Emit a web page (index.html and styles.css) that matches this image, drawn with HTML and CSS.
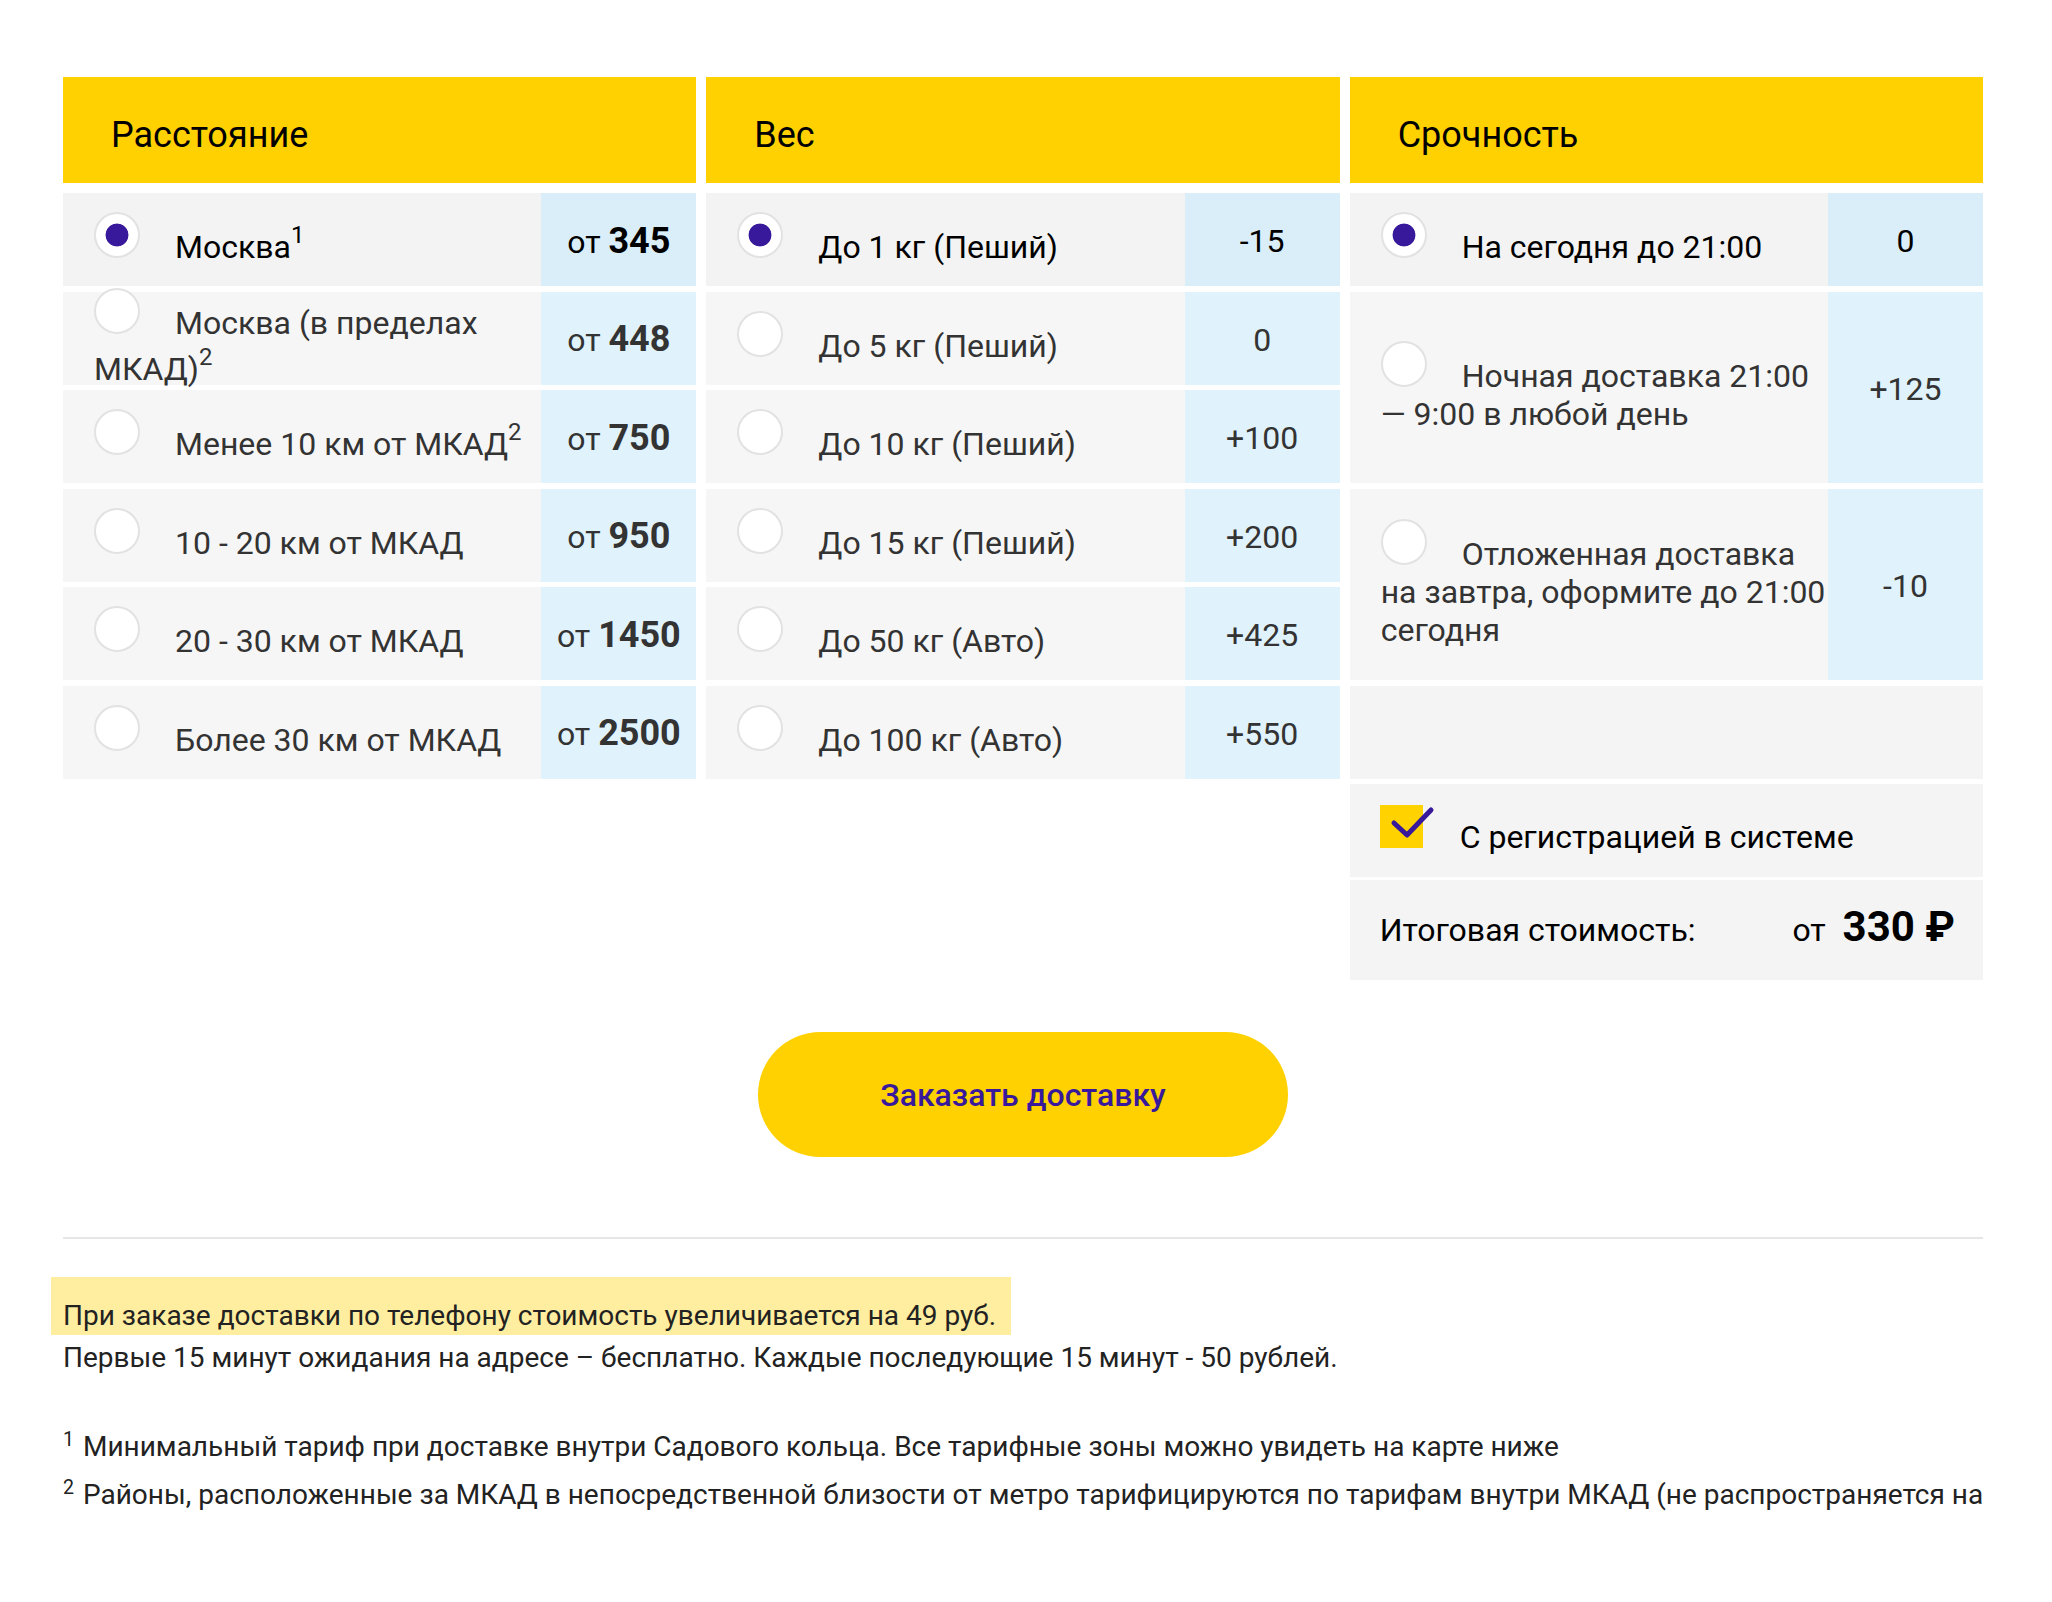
FILE: index.html
```html
<!DOCTYPE html>
<html lang="ru">
<head>
<meta charset="utf-8">
<title>Калькулятор доставки</title>
<link rel="stylesheet" href="styles.css">
</head>
<body>
<main class="page">
  <section class="calc">
    <div class="col">
      <div class="head">Расстояние</div>
      <div class="row sel">
        <div class="lbl"><div class="txt"><span class="radio on"></span>Москва<sup>1</sup></div></div>
        <div class="val"><span>от <b>345</b></span></div>
      </div>
      <div class="row">
        <div class="lbl"><div class="txt"><span class="radio"></span>Москва (в пределах МКАД)<sup>2</sup></div></div>
        <div class="val"><span>от <b>448</b></span></div>
      </div>
      <div class="row">
        <div class="lbl"><div class="txt"><span class="radio"></span>Менее 10 км от МКАД<sup>2</sup></div></div>
        <div class="val"><span>от <b>750</b></span></div>
      </div>
      <div class="row">
        <div class="lbl"><div class="txt"><span class="radio"></span>10 - 20 км от МКАД</div></div>
        <div class="val"><span>от <b>950</b></span></div>
      </div>
      <div class="row">
        <div class="lbl"><div class="txt"><span class="radio"></span>20 - 30 км от МКАД</div></div>
        <div class="val"><span>от <b>1450</b></span></div>
      </div>
      <div class="row">
        <div class="lbl"><div class="txt"><span class="radio"></span>Более 30 км от МКАД</div></div>
        <div class="val"><span>от <b>2500</b></span></div>
      </div>
    </div>

    <div class="col">
      <div class="head">Вес</div>
      <div class="row sel">
        <div class="lbl"><div class="txt"><span class="radio on"></span>До 1 кг (Пеший)</div></div>
        <div class="val"><span>-15</span></div>
      </div>
      <div class="row">
        <div class="lbl"><div class="txt"><span class="radio"></span>До 5 кг (Пеший)</div></div>
        <div class="val"><span>0</span></div>
      </div>
      <div class="row">
        <div class="lbl"><div class="txt"><span class="radio"></span>До 10 кг (Пеший)</div></div>
        <div class="val"><span>+100</span></div>
      </div>
      <div class="row">
        <div class="lbl"><div class="txt"><span class="radio"></span>До 15 кг (Пеший)</div></div>
        <div class="val"><span>+200</span></div>
      </div>
      <div class="row">
        <div class="lbl"><div class="txt"><span class="radio"></span>До 50 кг (Авто)</div></div>
        <div class="val"><span>+425</span></div>
      </div>
      <div class="row">
        <div class="lbl"><div class="txt"><span class="radio"></span>До 100 кг (Авто)</div></div>
        <div class="val"><span>+550</span></div>
      </div>
    </div>

    <div class="col">
      <div class="head">Срочность</div>
      <div class="row sel">
        <div class="lbl"><div class="txt"><span class="radio on"></span>На сегодня до 21:00</div></div>
        <div class="val"><span>0</span></div>
      </div>
      <div class="row tall">
        <div class="lbl"><div class="txt"><span class="radio"></span>Ночная доставка 21:00 — 9:00 в любой день</div></div>
        <div class="val"><span>+125</span></div>
      </div>
      <div class="row tall">
        <div class="lbl"><div class="txt"><span class="radio"></span>Отложенная доставка на завтра, оформите до 21:00 сегодня</div></div>
        <div class="val"><span>-10</span></div>
      </div>
      <div class="row empty"></div>
      <div class="row reg">
        <div class="txt dark"><span class="check"><svg width="43" height="43" viewBox="0 0 43 43"><polyline points="14,18 27,30 51,5" fill="none" stroke="#38199b" stroke-width="5" stroke-linecap="round" stroke-linejoin="round"/></svg></span>С регистрацией в системе</div>
      </div>
      <div class="row total">
        <span class="total-lbl">Итоговая стоимость:</span>
        <span class="total-sum">от <b>330 ₽</b></span>
      </div>
    </div>
  </section>

  <div class="order"><button class="btn" type="button">Заказать доставку</button></div>

  <hr class="rule">

  <div class="notes">
    <p class="hl">При заказе доставки по телефону стоимость увеличивается на 49 руб.</p>
    <p class="wait">Первые 15 минут ожидания на адресе – бесплатно. Каждые последующие 15 минут - 50 рублей.</p>
    <p class="fn first"><sup>1</sup> Минимальный тариф при доставке внутри Садового кольца. Все тарифные зоны можно увидеть на карте ниже</p>
    <p class="fn"><sup>2</sup> Районы, расположенные за МКАД в непосредственной близости от метро тарифицируются по тарифам внутри МКАД (не распространяется на</p>
  </div>
</main>
</body>
</html>
```

FILE: styles.css
```css
* { box-sizing: border-box; }

body {
  margin: 0;
  background: #ffffff;
  font-family: Roboto, "Liberation Sans", Arial, sans-serif;
  color: #333333;
}

.page {
  width: 1920px;
  margin-left: 63px;
  padding-top: 77px;
}

.calc {
  display: grid;
  grid-template-columns: repeat(3, 1fr);
  column-gap: 10px;
  align-items: start;
}

.col {
  display: flex;
  flex-direction: column;
  gap: 5.5px;
}

.head {
  height: 106px;
  margin-bottom: 4.5px;
  padding: 10px 0 0 48px;
  background: #ffd100;
  color: #000;
  font-size: 36px;
  display: flex;
  align-items: center;
}

.row {
  display: flex;
  height: 93px;
  background: #f6f6f6;
}

.row.sel { background: #f3f3f3; }
.row.tall { height: 191.5px; }

.lbl {
  flex: 1;
  min-width: 0;
  display: flex;
  align-items: center;
  padding-left: 31px;
}

.txt {
  font-size: 32px;
  line-height: 1.2;
}

.sel .txt, .sel .val, .dark { color: #000; }

.txt sup {
  font-size: 0.75em;
  vertical-align: 15px;
}

.radio {
  display: inline-block;
  width: 46px;
  height: 46px;
  margin-right: 35px;
  border: 2px solid #e2e2e2;
  border-radius: 50%;
  background: #ffffff;
  vertical-align: baseline;
}

.radio.on {
  background: radial-gradient(circle at center, #38199b 0, #38199b 11px, #ffffff 11.8px);
}

.val {
  width: 155px;
  flex: none;
  display: flex;
  align-items: center;
  justify-content: center;
  padding-top: 4px;
  background: #e0f2fb;
  font-size: 32px;
  line-height: 1.2;
  white-space: nowrap;
}

.row.sel .val { background: #d9eef9; }

.val b {
  font-size: 36px;
  font-weight: 700;
}

.row.empty { background: #f4f4f4; }

.row.reg {
  background: #f4f4f4;
  align-items: center;
  padding-left: 30px;
}

.check {
  display: inline-block;
  width: 43px;
  height: 43px;
  margin-right: 37px;
  background: #ffd200;
  vertical-align: baseline;
}

.check svg {
  display: block;
  overflow: visible;
}

.row.total {
  height: 100px;
  margin-top: -2.5px;
  background: #f4f4f4;
  padding: 22px 28px 0 30px;
  align-items: baseline;
  justify-content: space-between;
  line-height: 50px;
  font-size: 32px;
  color: #000;
}

.total-sum b {
  font-size: 42px;
  font-weight: 700;
  margin-left: 9px;
}

.order {
  display: flex;
  justify-content: center;
  margin-top: 52px;
}

.btn {
  width: 530px;
  height: 125px;
  border: 0;
  border-radius: 63px;
  background: #ffd100;
  color: #38199b;
  font-family: Roboto, "Liberation Sans", Arial, sans-serif;
  font-size: 32px;
  font-weight: 500;
  cursor: pointer;
}

.rule {
  border: 0;
  height: 2px;
  margin: 80px 0 0;
  background: #e6e6e6;
}

.notes {
  margin-top: 38px;
  font-size: 28px;
  color: #222222;
}

.notes p { margin: 0; }

.hl {
  width: fit-content;
  margin-left: -12px !important;
  padding: 19px 15px 0 12px;
  line-height: 39px;
  background: #ffeea0;
}

.wait { line-height: 46px; }

.fn {
  line-height: 48px;
  white-space: nowrap;
  overflow: hidden;
}

.fn.first { margin-top: 42px !important; }

.fn sup {
  font-size: 0.7em;
  line-height: 0;
  margin-right: 2px;
}
```
